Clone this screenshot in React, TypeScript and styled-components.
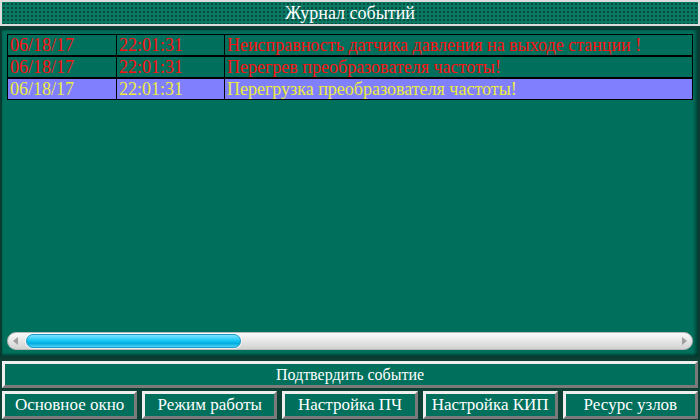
import React from "react";
import styled, { createGlobalStyle } from "styled-components";

const Global = createGlobalStyle`
  html, body { margin: 0; padding: 0; }
  body {
    width: 700px; height: 420px; overflow: hidden;
    background: #0e3f34;
    font-family: "Liberation Serif", "DejaVu Serif", serif;
  }
`;

const Screen = styled.div`
  width: 700px; height: 420px;
  display: flex; flex-direction: column;
  gap: 2px;
  box-sizing: border-box;
`;

const Header = styled.div`
  height: 26px; box-sizing: border-box;
  border: 2px solid #dcdcdc;
  background-color: #0a7863;
  background-image: radial-gradient(circle, #0a4a3c 0.8px, transparent 1.3px);
  background-size: 4px 4px;
  color: #ffffff;
  font-size: 18px;
  display: flex; align-items: center; justify-content: center;
`;

const Panel = styled.div`
  height: 330px; box-sizing: border-box;
  background: #006f5c;
  border: 2px solid #0a3b30;
  box-shadow: inset -3px 0 3px rgba(0,0,0,0.35), inset 0 -2px 2px rgba(0,0,0,0.3);
  padding: 4px 5px 6px 5px;
  display: flex; flex-direction: column; justify-content: space-between;
`;

const Table = styled.div`
  border: 1px solid #000;
  display: flex; flex-direction: column;
`;

const Row = styled.div<{ $hl?: boolean }>`
  display: grid;
  grid-template-columns: 108px 108px 1fr;
  height: 20px;
  background: ${p => (p.$hl ? "#8080ff" : "transparent")};
  color: ${p => (p.$hl ? "#ecec3a" : "#ff1010")};
  & + & { border-top: 2px solid #000; }
`;

const Cell = styled.div`
  font-size: 18px; line-height: 20px;
  padding-left: 2px;
  white-space: nowrap; overflow: hidden;
  & + & { border-left: 1px solid #000; }
`;

const ScrollTrack = styled.div`
  height: 18px; border-radius: 9px;
  background: linear-gradient(#fafafa, #e6e6e6 50%, #d2d2d2);
  border: 1px solid #b8b8b8;
  box-sizing: border-box;
  position: relative;
  display: flex; align-items: center; justify-content: space-between;
  padding: 0 5px;
`;

const Arrow = styled.svg`
  width: 6px; height: 8px;
`;

const Thumb = styled.div`
  position: absolute; left: 18px; top: 1px;
  width: 215px; height: 14px;
  border-radius: 7px;
  box-sizing: border-box;
  border: 1px solid #1a9ccc;
  background: linear-gradient(#7fe4ff, #1cc8f5 45%, #00aee0 70%, #4fd4f6);
  box-shadow: 0 0 0 1px rgba(255,255,255,0.6);
`;

const Bevel = styled.div`
  box-sizing: border-box;
  border: 3px solid;
  border-color: #eeeeee #7a7a7a #7a7a7a #eeeeee;
  background: #006f5c;
  color: #ffffff;
  display: flex; align-items: center; justify-content: center;
  white-space: nowrap;
`;

const Confirm = styled(Bevel)`
  height: 27px; margin: 1px 2px 0 2px;
  font-size: 16px;
`;

const ButtonBar = styled.div`
  height: 28px; margin: 1px 2px 0 2px;
  display: grid; grid-template-columns: repeat(5, 1fr); gap: 5px;
`;

const NavButton = styled(Bevel)`
  font-size: 17px;
`;

const rows = [
  { d: "06/18/17", t: "22:01:31", m: "Неисправность датчика давления на выходе станции !" },
  { d: "06/18/17", t: "22:01:31", m: "Перегрев преобразователя частоты!" },
  { d: "06/18/17", t: "22:01:31", m: "Перегрузка преобразователя частоты!", hl: true },
];

const buttons = ["Основное окно", "Режим работы", "Настройка ПЧ", "Настройка КИП", "Ресурс узлов"];

export default function App() {
  return (
    <>
      <Global />
      <Screen>
        <Header>Журнал событий</Header>
        <Panel>
          <Table>
            {rows.map((r, i) => (
              <Row key={i} $hl={r.hl}>
                <Cell>{r.d}</Cell>
                <Cell>{r.t}</Cell>
                <Cell>{r.m}</Cell>
              </Row>
            ))}
          </Table>
          <ScrollTrack>
            <Arrow viewBox="0 0 6 8"><path d="M5 0 L0 4 L5 8 Z" fill="#a0a0a0" /></Arrow>
            <Thumb />
            <Arrow viewBox="0 0 6 8"><path d="M1 0 L6 4 L1 8 Z" fill="#a0a0a0" /></Arrow>
          </ScrollTrack>
        </Panel>
        <Confirm>Подтвердить событие</Confirm>
        <ButtonBar>
          {buttons.map(b => <NavButton key={b}>{b}</NavButton>)}
        </ButtonBar>
      </Screen>
    </>
  );
}
